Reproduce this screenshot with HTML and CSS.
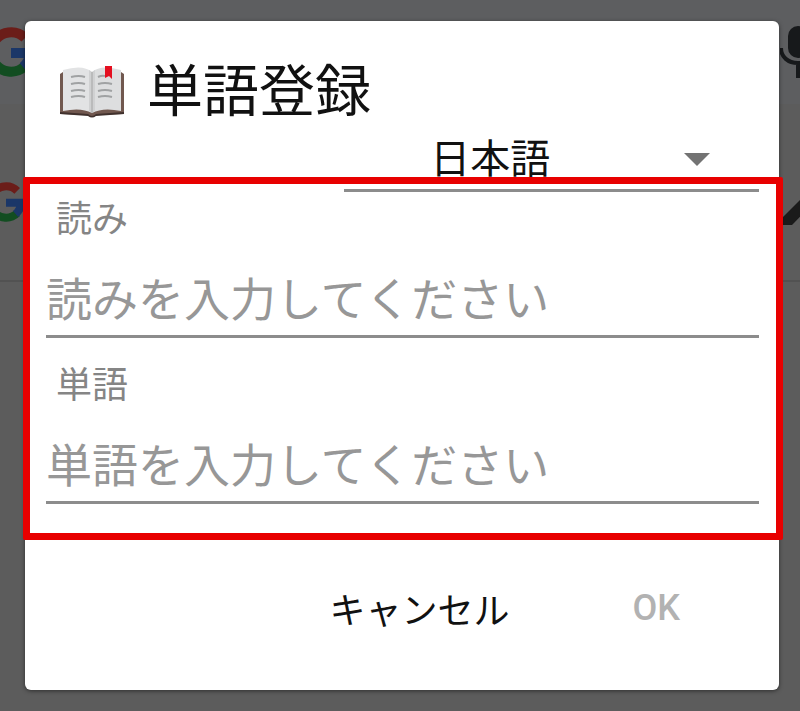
FILE: index.html
```html
<!DOCTYPE html>
<html lang="ja">
<head>
    <meta charset="utf-8">
    <meta name="viewport" content="width=device-width, initial-scale=1">
    <title>単語登録</title>
    <link rel="stylesheet" href="styles.css">
</head>
<body>

    <div class="backdrop" aria-hidden="true">
        <div class="backdrop-row backdrop-search">
            <svg class="google" width="50" height="50" viewBox="0 0 50 50" fill="none" stroke-width="10">
                <path d="M8 15A20 20 0 0 1 39 11" stroke="#6b1d19"/>
                <path d="M8 35A20 20 0 0 1 8 15" stroke="#6b5310"/>
                <path d="M39 39A20 20 0 0 1 8 35" stroke="#124d21"/>
                <path d="M25 26H44A20 20 0 0 1 37 40" stroke="#1b3768"/>
            </svg>
            <svg class="mic" width="44" height="56" viewBox="0 0 44 56" fill="none">
                <rect x="8" y="2" width="20" height="32" rx="10" fill="#17191b"/>
                <path d="M1 24C1 33 8 39 18 39S35 33 35 24M18 39V54" stroke="#17191b" stroke-width="4"/>
            </svg>
        </div>
        <div class="backdrop-row">
            <svg class="google" width="40" height="40" viewBox="0 0 50 50" fill="none" stroke-width="10">
                <path d="M8 15A20 20 0 0 1 39 11" stroke="#6b1d19"/>
                <path d="M8 35A20 20 0 0 1 8 15" stroke="#6b5310"/>
                <path d="M39 39A20 20 0 0 1 8 35" stroke="#124d21"/>
                <path d="M25 26H44A20 20 0 0 1 37 40" stroke="#1b3768"/>
            </svg>
            <svg class="pen" width="44" height="48" viewBox="0 0 44 48">
                <path d="M3 47V39L36 6L44 14L12 47Z" fill="#1a1a1a"/>
            </svg>
        </div>
    </div>

    <form class="dialog">
        <header class="dialog-header">
            <svg class="book" width="66" height="54" viewBox="0 0 66 54">
                <path d="M1 9L4 7H62L65 9V49L37 50Q33 54 29 50L1 49Z" fill="#71584f"/>
                <path d="M1 47L29 49Q33 53 37 49L65 47V49L37 51Q33 54 29 51L1 49Z" fill="#40312d"/>
                <path d="M4 5Q24 -1 33 7V48Q22 42 4 46Z" fill="#e2e3e4"/>
                <path d="M62 5Q42 -1 33 7V48Q44 42 62 46Z" fill="#dddedf"/>
                <path d="M30 5L33 7L36 5V46L33 48L30 46Z" fill="#d0d1d2"/>
                <path d="M33 7V48" stroke="#a4a4a4"/>
                <path d="M12 12Q20 10 26 12M12 19Q20 17 26 19M12 26Q20 24 26 26M12 32Q20 30 26 32M39 12Q43 10 46 11M39 19Q46 17 53 19M39 26Q46 24 53 26M39 32Q46 30 53 32" fill="none" stroke="#a0a2a3" stroke-width="2"/>
                <path d="M46 1H53V14L50 11L46 13Z" fill="#e40f20"/>
            </svg>
            <h1 class="dialog-title">単語登録</h1>
        </header>

        <div class="language">
            <select class="language-select" name="language" aria-label="言語">
                <option>日本語</option>
            </select>
            <svg class="language-arrow" width="26" height="14" viewBox="0 0 26 14">
                <path d="M0 0H26L13 13Z" fill="#737373"/>
            </svg>
        </div>

        <div class="fields">
            <div class="field">
                <label class="field-label" for="reading">読み</label>
                <input class="field-input" type="text" id="reading" name="reading" placeholder="読みを入力してください">
            </div>
            <div class="field">
                <label class="field-label" for="word">単語</label>
                <input class="field-input" type="text" id="word" name="word" placeholder="単語を入力してください">
            </div>
        </div>

        <footer class="dialog-actions">
            <button class="action" type="button">キャンセル</button>
            <button class="action action-ok" type="submit" disabled>OK</button>
        </footer>
    </form>

</body>
</html>
```
FILE: styles.css
```css
* {
    box-sizing: border-box;
}

body {
    margin: 0;
    min-height: 100vh;
    padding: 21px 21px 21px 25px;
    display: flex;
    background: #5c5c5c;
    font-family: Roboto, "Noto Sans CJK JP", sans-serif;
}

/* dimmed page behind the dialog */
.backdrop {
    position: absolute;
    inset: 0;
    overflow: hidden;
}

.backdrop-row {
    display: flex;
    justify-content: space-between;
    align-items: center;
    height: 178px;
    margin: 0 -24px 0 -14px;
    padding-top: 20px;
    border-bottom: 2px solid #525252;
}

.backdrop-search {
    height: 104px;
    padding-top: 0;
    border-bottom: 0;
    background: #5d5e60;
}

.dialog {
    position: relative;
    flex: 1;
    min-width: 0;
    display: flex;
    flex-direction: column;
    background: #fff;
    border-radius: 6px;
    box-shadow: 0 1px 4px rgba(0, 0, 0, 0.5);
}

.dialog-header {
    display: flex;
    align-items: center;
    gap: 22px;
    padding: 37px 36px 4px 34px;
}

.dialog-title {
    margin: 0;
    font-size: 56px;
    font-weight: 400;
    line-height: 68px;
    color: #111;
}

.language {
    position: relative;
    width: 55%;
    margin: 0 20px 0 auto;
}

.language-select {
    display: block;
    width: 100%;
    height: 62px;
    padding: 0 86px;
    border: 0;
    border-bottom: 3px solid #8c8c8c;
    border-radius: 0;
    background: transparent;
    appearance: none;
    font: inherit;
    font-size: 40px;
    color: #111;
}

.language-arrow {
    position: absolute;
    top: 23px;
    right: 49px;
    pointer-events: none;
}

.fields {
    position: relative;
    display: flex;
    flex-direction: column;
    gap: 20px;
    padding: 0 20px 36px 21px;
}

/* red frame over the input area */
.fields::after {
    content: "";
    position: absolute;
    inset: -15px -4px 0 -2px;
    border: 7px solid #e80000;
    border-radius: 2px;
    pointer-events: none;
}

.field {
    display: flex;
    flex-direction: column;
}

.field-label {
    padding-left: 10px;
    font-size: 36px;
    line-height: 56px;
    color: #858585;
}

.field-input {
    width: 100%;
    height: 90px;
    padding: 16px 0 0;
    border: 0;
    border-bottom: 3px solid #8c8c8c;
    border-radius: 0;
    background: transparent;
    font: inherit;
    font-size: 46px;
    color: #111;
}

.field-input::placeholder {
    color: #979797;
    opacity: 1;
}

.dialog-actions {
    display: flex;
    justify-content: flex-end;
    gap: 123px;
    padding: 40px 99px 40px 20px;
}

.action {
    height: 56px;
    padding: 0;
    border: 0;
    background: transparent;
    font: inherit;
    font-size: 36px;
    color: #111;
}

.action-ok {
    font-weight: 500;
    color: #b2b2b2;
}
```
